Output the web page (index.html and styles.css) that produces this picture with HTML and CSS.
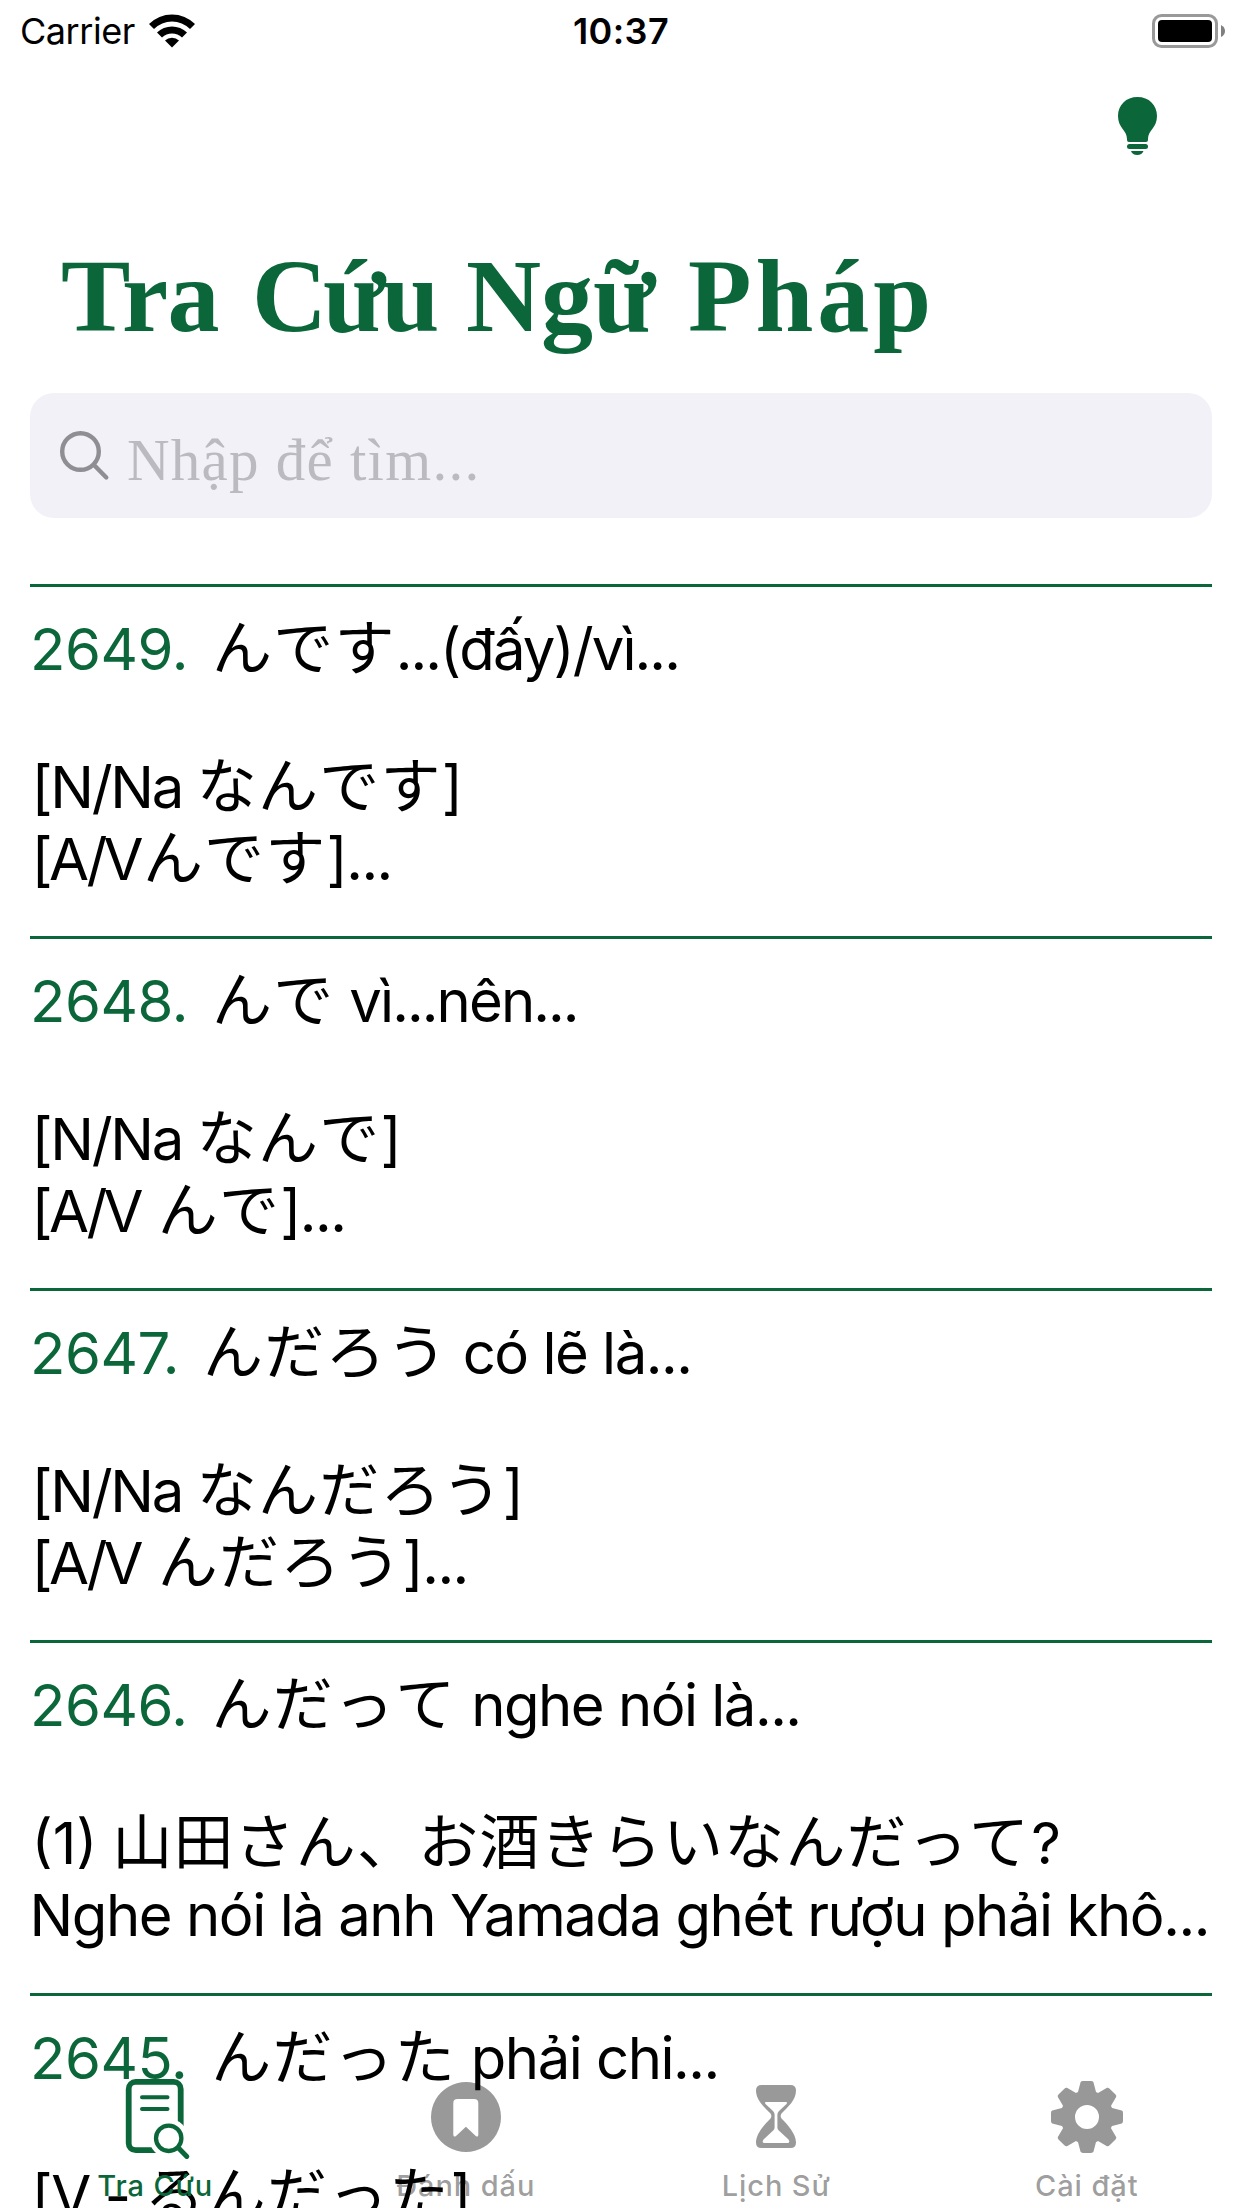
FILE: index.html
```html
<!DOCTYPE html>
<html lang="vi">
<head>
<meta charset="utf-8">
<title>Tra Cứu Ngữ Pháp</title>
<link rel="stylesheet" href="styles.css">
</head>
<body>
<div class="screen">
  <header class="status">
    <div class="status-left">
      <span class="carrier">Carrier</span>
      <svg class="wifi" viewBox="0 0 46 34"><path d="M0 10A32.500 32.500 0 0 1 46 10L41 15A25.500 25.500 0 0 0 5 15Z"/><path d="M8 18.500A21.500 21.500 0 0 1 38 18.500L33 23.500A14.500 14.500 0 0 0 13 23.500Z"/><path d="M16 26.500A10 10 0 0 1 30 26.500L23 33.500Z"/></svg>
    </div>
    <span class="clock">10:37</span>
    <svg class="battery" viewBox="0 0 74 34"><rect x="2.500" y="1.500" width="63" height="31" rx="8" fill="none" stroke="#999" stroke-width="3"/><rect x="7" y="6" width="54" height="22" rx="4"/><path d="M70 11Q74 13 74 17T70 23Z" fill="#808080"/></svg>
  </header>
  <div class="toolbar">
    <svg class="bulb" viewBox="0 0 39 58"><path d="M19.500 0C8 0 0 8 0 19C0 31 9 33 9 42V43Q9 45 11 45H28Q30 45 30 43V42C30 33 39 31 39 19C39 8 31 0 19.500 0Z"/><rect x="9" y="47" width="21" height="5" rx="2.500"/><path d="M13 54H25.500Q24 58 19.200 58T13 54Z"/></svg>
  </div>
  <h1 class="title"><span class="tra">Tra</span> <span class="cuu">Cứu</span> <span>Ngữ</span> <span class="phap">Pháp</span></h1>
  <div class="search">
    <svg class="glass" viewBox="0 0 50 50"><circle cx="20.500" cy="20.500" r="18.300"/><path d="M34 34L46.300 46.500"/></svg>
    <span class="placeholder">Nhập để tìm...</span>
  </div>
  <main class="list">
    <article class="row">
      <h2 class="head"><span class="num">2649.</span><span class="jp">んです</span><span class="snug">...(đấy)/vì...</span></h2>
      <p class="line"><span class="noun">[N/Na</span> <span class="jp">なんです</span><span>]</span></p>
      <p class="line"><span class="verb">[A/V</span><span class="jp">んです</span><span>]...</span></p>
    </article>
    <article class="row">
      <h2 class="head"><span class="num">2648.</span><span class="jp">んで</span> <span class="snug">vì...nên...</span></h2>
      <p class="line"><span class="noun">[N/Na</span> <span class="jp">なんで</span><span>]</span></p>
      <p class="line"><span class="verb">[A/V</span> <span class="jp">んで</span><span>]...</span></p>
    </article>
    <article class="row">
      <h2 class="head"><span class="num">2647.</span><span class="jp">んだろう</span> <span>có lẽ là...</span></h2>
      <p class="line"><span class="noun">[N/Na</span> <span class="jp">なんだろう</span><span>]</span></p>
      <p class="line"><span class="verb">[A/V</span> <span class="jp">んだろう</span><span>]...</span></p>
    </article>
    <article class="row tall">
      <h2 class="head"><span class="num">2646.</span><span class="jp">んだって</span> <span>nghe nói là...</span></h2>
      <p class="line"><span class="index">(1)</span> <span class="jp">山田さん、お酒きらいなんだって</span><span class="mark">?</span></p>
      <p class="line"><span class="sentence">Nghe nói là anh Yamada ghét rượu phải khô...</span></p>
    </article>
    <article class="row">
      <h2 class="head"><span class="num">2645.</span><span class="jp">んだった</span> <span>phải chi...</span></h2>
      <p class="line"><span>[V -</span> <span class="jp">るんだった</span><span>]</span></p>
    </article>
  </main>
  <nav class="tabs">
    <div class="tab active">
      <svg class="icon" viewBox="0 0 90 90" fill="none" stroke="currentColor" stroke-linecap="round">
        <mask id="lens-gap"><rect width="90" height="90" fill="#fff" stroke="none"/><circle cx="58.700" cy="68.300" r="19.500" fill="#000" stroke="none"/></mask>
        <rect x="18.700" y="11.900" width="52" height="68.300" rx="7" stroke-width="5.800" mask="url(#lens-gap)"/>
        <path d="M32 27.300H57.500M32 39H57.500" stroke-width="4"/>
        <circle cx="58.700" cy="68.300" r="12.700" stroke-width="4.300"/>
        <path d="M68.500 78L76.800 86.400" stroke-width="5"/>
      </svg>
      <span class="label">Tra Cứu</span>
    </div>
    <div class="tab">
      <svg class="icon" viewBox="0 0 90 90"><path fill-rule="evenodd" d="M45 12A35 35 0 1 1 44.990 12ZM36.500 29Q32.300 29 32.300 33.200V65Q32.800 67.400 35 66L44.900 56.700L54.800 66Q57 67.400 57.300 65V33.200Q57.300 29 53.100 29Z"/></svg>
      <span class="label">Đánh dấu</span>
    </div>
    <div class="tab">
      <svg class="icon" viewBox="0 0 90 90"><path fill-rule="evenodd" d="M30.500 15H59.500Q65 15 65 20.500C65 30 57 37 50.500 43.500Q48.800 46 50.500 48.500C57 55 65 64 65 72.500Q65 78 59.500 78H30.500Q25 78 25 72.500C25 64 33 55 39.500 48.500Q41.200 46 39.500 43.500C33 37 25 30 25 20.500Q25 15 30.500 15ZM35 32Q33.200 32.200 34.500 34L42 41Q43.600 42.500 43.600 44.500V57.500Q43.600 59.300 42.200 60.500L32.500 69.500Q30.500 73 33.500 73H56.500Q59.500 73 57.500 69.500L47.800 60.500Q46.400 59.300 46.400 57.500V44.500Q46.400 42.500 48 41L55.500 34Q56.800 32.200 55 32Z"/></svg>
      <span class="label">Lịch Sử</span>
    </div>
    <div class="tab">
      <svg class="icon gear" viewBox="0 0 90 90">
        <defs><path id="tooth" d="M36.500 24L39.500 12.500Q39.700 12 41 12H49Q50.300 12 50.500 12.500L53.500 24Z"/></defs>
        <circle cx="45" cy="47" r="19.200" fill="none" stroke="#000" stroke-width="14.400"/>
        <g stroke="#000" stroke-width="2" stroke-linejoin="round"><use href="#tooth"/><use href="#tooth" transform="rotate(45 45 47)"/><use href="#tooth" transform="rotate(90 45 47)"/><use href="#tooth" transform="rotate(135 45 47)"/><use href="#tooth" transform="rotate(180 45 47)"/><use href="#tooth" transform="rotate(225 45 47)"/><use href="#tooth" transform="rotate(270 45 47)"/><use href="#tooth" transform="rotate(315 45 47)"/></g>
      </svg>
      <span class="label">Cài đặt</span>
    </div>
  </nav>
</div>
</body>
</html>
```
FILE: styles.css
```css
:root {
  --green: #0b673a;
}

* {
  box-sizing: border-box;
  margin: 0;
  padding: 0;
}

body {
  background: #fff;
  color: #000;
  font-family: Inter, "Noto Sans CJK JP", sans-serif;
}

.screen {
  position: relative;
  width: 1242px;
  height: 2208px;
  overflow: hidden;
}

svg {
  display: block;
  flex: none;
}

/* Status bar */
.status {
  display: grid;
  grid-template-columns: 1fr auto 1fr;
  align-items: center;
  height: 60px;
  padding: 0 17px 0 20px;
  font-size: 36px;
  line-height: 60px;
}

.status-left {
  display: flex;
  align-items: center;
  gap: 14px;
}

.carrier {
  letter-spacing: -0.45px;
  padding-top: 1px;
}

.clock {
  font-weight: 600;
  letter-spacing: 0.4px;
  padding: 1px 3px 0 0;
}

.wifi {
  width: 46px;
  height: 34px;
}

.battery {
  width: 74px;
  height: 34px;
  justify-self: end;
}

.toolbar {
  display: flex;
  justify-content: flex-end;
  height: 176px;
  padding: 37px 85px 0 0;
}

.bulb {
  width: 39px;
  height: 58px;
  fill: var(--green);
}

/* Each word of the heading starts its own column */
.title {
  display: grid;
  grid-template-columns: 191px 214px 222px auto;
  padding-left: 61px;
  color: var(--green);
  font: bold 104px/120px "Liberation Serif", serif;
  white-space: nowrap;
}

.tra {
  letter-spacing: -0.7px;
}

.cuu {
  letter-spacing: -4px;
}

.phap {
  letter-spacing: 4px;
}

/* Search field */
.search {
  display: flex;
  align-items: center;
  gap: 17px;
  height: 125px;
  margin: 37px 30px 66px;
  padding-left: 30px;
  border-radius: 24px;
  background: #f2f1f7;
}

.glass {
  width: 50px;
  height: 50px;
  fill: none;
  stroke: #8e8e93;
  stroke-width: 4.4;
  stroke-linecap: round;
}

.placeholder {
  margin-top: 9px;
  color: #bbbac0;
  font: 59px/70px "Liberation Serif", serif;
  letter-spacing: 1.25px;
}

/* Grammar list */
.row {
  height: 352px;
  margin: 0 30px;
  padding-top: 26px;
  border-top: 3px solid var(--green);
  font-size: 58px;
  line-height: 72px;
  letter-spacing: -1.5px;
  white-space: nowrap;
}

.tall {
  height: 353px;
}

.head {
  margin-bottom: 66px;
  font-size: 58px;
  font-weight: 400;
}

.line {
  padding-left: 1.5px;
}

.num {
  margin-right: 24px;
  color: var(--green);
  letter-spacing: -0.4px;
}

.jp {
  font-family: "Noto Sans CJK JP", sans-serif;
  font-size: 60px;
  font-kerning: none;
  letter-spacing: 1.2px;
  line-height: 0;
}

.snug {
  letter-spacing: -1.9px;
}

.noun {
  letter-spacing: -2.3px;
}

.verb {
  margin-right: 3px;
  letter-spacing: -3.7px;
}

.index {
  letter-spacing: 0;
}

.mark {
  margin-left: 1px;
}

.sentence {
  margin-left: -2px;
  letter-spacing: -1.44px;
}

/* Tab bar, floating over the list */
.tabs {
  position: absolute;
  left: 0;
  right: 0;
  bottom: 0;
  display: grid;
  grid-template-columns: repeat(4, 1fr);
  height: 138px;
}

.tab {
  display: flex;
  flex-direction: column;
  align-items: center;
  gap: 6px;
  color: rgba(0, 0, 0, 0.4);
}

.active {
  color: var(--green);
}

.icon {
  width: 90px;
  height: 90px;
  fill: currentColor;
}

.active .icon {
  fill: none;
}

.gear {
  fill: #000;
  opacity: 0.4;
}

.label {
  font-size: 29px;
  font-weight: 500;
  line-height: 40px;
  letter-spacing: 0.9px;
}
```
